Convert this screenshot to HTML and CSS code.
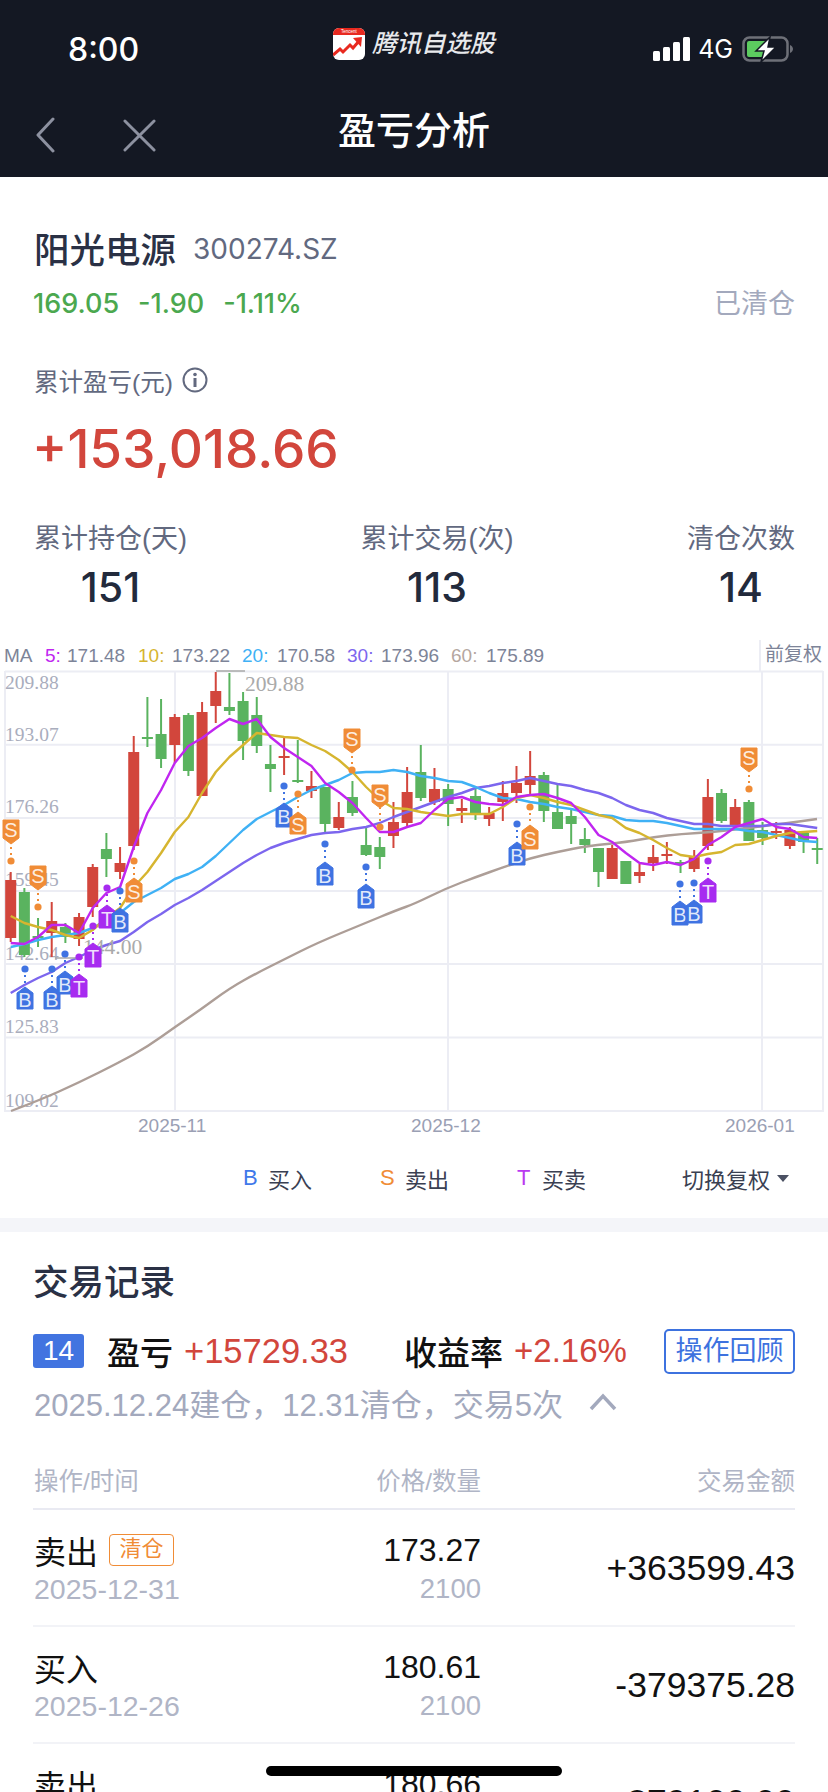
FILE: index.html
```html
<!DOCTYPE html>
<html lang="zh-CN">
<head>
    <meta charset="UTF-8">
    <meta name="viewport" content="width=device-width, initial-scale=1.0">
    <title>盈亏分析</title>
    <link rel="stylesheet" href="styles.css">
</head>
<body>
    <div class="page">
        <header class="app-header">
            <div class="status-bar">
                <div class="clock">8:00</div>
                <div class="app-brand">
                    <svg class="app-logo" viewBox="0 0 32 32">
                        <rect width="32" height="32" rx="6" fill="#fff"/>
                        <path d="M0 7V6a6 6 0 0 1 6-6h20a6 6 0 0 1 6 6v1z" fill="#e8291f"/>
                        <text class="logo-text" x="16" y="5">Tencent</text>
                        <path d="M0 27l7-6 3 3 7-7 3 3 6-7" fill="none" stroke="#e8291f" stroke-width="3"/>
                        <path d="M20 10l9-1-1 10z" fill="#e8291f"/>
                    </svg>
                    <span class="app-name">腾讯自选股</span>
                </div>
                <div class="status-icons">
                    <svg class="signal" viewBox="0 0 37 24">
                        <rect x="0" y="14" width="7" height="10" rx="1.5"/>
                        <rect x="10" y="10" width="7" height="14" rx="1.5"/>
                        <rect x="20" y="5" width="7" height="19" rx="1.5"/>
                        <rect x="30" y="0" width="7" height="24" rx="1.5"/>
                    </svg>
                    <span class="network">4G</span>
                    <svg class="battery" viewBox="0 0 52 26">
                        <rect x="1.5" y="1.5" width="44" height="23" rx="6" fill="none" stroke="#6e7078" stroke-width="2.5"/>
                        <path d="M48 9c2 1 3 2.500 3 4s-1 3-3 4z" fill="#6e7078"/>
                        <path d="M7 5h18v16H7a2 2 0 0 1-2-2V7a2 2 0 0 1 2-2z" fill="#5ccb5f"/>
                        <path d="M28 1L14 15h8l-3 11 15-15h-8z" fill="#fff" stroke="#141823" stroke-width="1.500"/>
                    </svg>
                </div>
            </div>
            <nav class="nav-bar">
                <svg class="nav-icon nav-back" viewBox="0 0 20 36"><path d="M18 2L3 18l15 16"/></svg>
                <svg class="nav-icon nav-close" viewBox="0 0 34 34"><path d="M2 2l30 30M32 2L2 32"/></svg>
                <h1 class="nav-title">盈亏分析</h1>
            </nav>
        </header>

        <section class="summary">
            <div class="name-row">
                <span class="stock-name">阳光电源</span>
                <span class="stock-code">300274.SZ</span>
            </div>
            <div class="quote-row">
                <span class="quote">169.05</span>
                <span class="quote">-1.90</span>
                <span class="quote">-1.11%</span>
                <span class="cleared">已清仓</span>
            </div>
            <div class="total-label">
                累计盈亏(元)
                <svg class="info-icon" viewBox="0 0 26 26">
                    <circle cx="13" cy="13" r="11.500" fill="none" stroke="#62697f" stroke-width="2"/>
                    <circle cx="13" cy="7.500" r="1.800" fill="#62697f"/>
                    <rect x="11.500" y="11" width="3" height="9" fill="#62697f"/>
                </svg>
            </div>
            <div class="total-value">+153,018.66</div>
            <div class="stats">
                <div class="stat">
                    <div class="stat-label">累计持仓(天)</div>
                    <div class="stat-value">151</div>
                </div>
                <div class="stat">
                    <div class="stat-label">累计交易(次)</div>
                    <div class="stat-value">113</div>
                </div>
                <div class="stat">
                    <div class="stat-label">清仓次数</div>
                    <div class="stat-value">14</div>
                </div>
            </div>
        </section>

        <svg id="kline" class="kline" viewBox="0 636 828 500"></svg>

        <div class="legend">
            <span class="legend-item"><b class="mark mark-buy">B</b>买入</span>
            <span class="legend-item"><b class="mark mark-sell">S</b>卖出</span>
            <span class="legend-item"><b class="mark mark-both">T</b>买卖</span>
            <span class="legend-switch">切换复权<i class="caret"></i></span>
        </div>

        <div class="section-gap"></div>

        <section class="trades">
            <h2 class="trades-title">交易记录</h2>
            <div class="round-row">
                <span class="round-no">14</span>
                <span class="round-key">盈亏</span>
                <span class="round-val">+15729.33</span>
                <span class="round-key round-key-rate">收益率</span>
                <span class="round-val round-val-rate">+2.16%</span>
                <span class="review-btn">操作回顾</span>
            </div>
            <div class="round-dates">
                2025.12.24建仓，12.31清仓，交易5次
                <svg class="fold-icon" viewBox="0 0 28 18"><path d="M2 16L14 3l12 13"/></svg>
            </div>
            <div class="trade-head">
                <span>操作/时间</span>
                <span class="cell-price">价格/数量</span>
                <span class="cell-amount">交易金额</span>
            </div>
            <div class="trade-row">
                <div>
                    <div class="trade-type">卖出<span class="clear-tag">清仓</span></div>
                    <div class="trade-date">2025-12-31</div>
                </div>
                <div class="cell-price">
                    <div class="trade-price">173.27</div>
                    <div class="trade-qty">2100</div>
                </div>
                <div class="cell-amount">+363599.43</div>
            </div>
            <div class="trade-row">
                <div>
                    <div class="trade-type">买入</div>
                    <div class="trade-date">2025-12-26</div>
                </div>
                <div class="cell-price">
                    <div class="trade-price">180.61</div>
                    <div class="trade-qty">2100</div>
                </div>
                <div class="cell-amount">-379375.28</div>
            </div>
            <div class="trade-row">
                <div>
                    <div class="trade-type">卖出</div>
                    <div class="trade-date">2025-12-26</div>
                </div>
                <div class="cell-price">
                    <div class="trade-price">180.66</div>
                    <div class="trade-qty">2100</div>
                </div>
                <div class="cell-amount">+379100.00</div>
            </div>
        </section>

        <div class="home-bar"></div>
    </div>

    <script src="chart.js"></script>
</body>
</html>
```
FILE: styles.css
```css
* {
    box-sizing: border-box;
}
html, body {
    margin: 0;
    padding: 0;
    background-color: white;
}
body {
    font-family: 'Liberation Sans', 'Noto Sans CJK SC', sans-serif;
}
.page {
    position: relative;
    width: 828px;
    height: 1792px;
    overflow: hidden;
}

/* top bar */
.app-header {
    height: 177px;
    background-color: #141823;
    color: white;
}
.status-bar {
    position: relative;
    display: flex;
    justify-content: space-between;
    align-items: center;
    height: 88px;
    padding: 10px 34px 0 68px;
}
.clock {
    font-family: Inter, sans-serif;
    font-size: 32px;
    font-weight: 500;
}
.app-brand {
    position: absolute;
    left: 333px;
    top: 28px;
    display: flex;
    align-items: center;
    gap: 7px;
    height: 32px;
}
.app-logo {
    width: 32px;
    height: 32px;
}
.logo-text {
    font-size: 4.5px;
    fill: white;
    text-anchor: middle;
}
.app-name {
    font-size: 24.500px;
    font-weight: 500;
    font-style: italic;
    line-height: 32px;
    color: #e8e9ec;
}
.status-icons {
    display: flex;
    align-items: center;
}
.signal {
    width: 37px;
    height: 24px;
    fill: white;
}
.network {
    font-family: Inter, sans-serif;
    font-size: 25px;
    margin: 0 9px 0 8px;
}
.battery {
    width: 52px;
    height: 26px;
}
.nav-bar {
    position: relative;
    display: flex;
    align-items: center;
    height: 89px;
    padding-left: 35px;
}
.nav-icon {
    fill: none;
    stroke: #8d91a0;
    stroke-width: 3;
    stroke-linecap: round;
    stroke-linejoin: round;
}
.nav-back {
    width: 20px;
    height: 36px;
    margin-top: 5px;
}
.nav-close {
    width: 33px;
    height: 33px;
    margin: 6px 0 0 68px;
}
.nav-title {
    position: absolute;
    left: 0;
    right: 0;
    top: 19px;
    margin: 0;
    text-align: center;
    font-size: 38px;
    font-weight: 500;
    line-height: 48px;
}

/* stock summary */
.summary {
    padding: 44px 33px 0 34px;
}
.name-row {
    display: flex;
    align-items: center;
    height: 52px;
}
.stock-name {
    font-size: 35.500px;
    font-weight: 500;
    color: #2a3145;
}
.stock-code {
    font-family: Inter, sans-serif;
    font-size: 28px;
    color: #62697f;
    margin: 3px 0 0 17px;
}
.quote-row {
    display: flex;
    align-items: center;
    gap: 19px;
    height: 58px;
    margin: 1px 0 0 -1px;
}
.quote {
    font-family: Inter, sans-serif;
    font-size: 27px;
    font-weight: 500;
    color: #4ba84f;
}
.cleared {
    margin: 0 0 4px auto;
    font-size: 27px;
    color: #a3a9bd;
}
.total-label {
    display: flex;
    align-items: center;
    gap: 9px;
    height: 34px;
    margin-top: 31px;
    font-size: 24.500px;
    color: #62697f;
}
.info-icon {
    width: 26px;
    height: 26px;
}
.total-value {
    height: 97px;
    margin-left: -2px;
    padding-top: 2px;
    font-family: Inter, sans-serif;
    font-size: 53px;
    font-weight: 500;
    line-height: 100px;
    color: #d2463c;
}
.stats {
    display: flex;
    justify-content: space-between;
    margin-top: 25px;
}
.stat {
    text-align: center;
}
.stat-label {
    font-size: 27px;
    line-height: 40px;
    color: #62697f;
}
.stat-value {
    font-family: Inter, sans-serif;
    font-size: 41px;
    font-weight: 500;
    line-height: 56px;
    color: #222a3c;
}

/* kline chart */
.kline {
    display: block;
    width: 828px;
    height: 500px;
    margin-top: 21px;
}
.kline text {
    font-family: 'Liberation Sans', 'Noto Sans CJK SC', sans-serif;
    font-size: 19px;
}
.kline .axis-price {
    font-family: 'Liberation Serif', serif;
    font-size: 19.5px;
    fill: #a9adbd;
}
.kline .axis-extreme {
    font-family: 'Liberation Serif', serif;
    font-size: 21.5px;
    fill: #aaaaaa;
}
.kline .axis-date {
    fill: #9aa0b4;
}
.kline .ma-value {
    fill: #7d8498;
}
.kline .adjust-label {
    fill: #7d8498;
}
.kline .tag-letter {
    font-size: 20px;
    fill: white;
    fill-opacity: 0.85;
    text-anchor: middle;
}

.legend {
    position: relative;
    display: flex;
    align-items: center;
    height: 82px;
    padding: 2px 0 0 243px;
    font-size: 22px;
    color: #3a4052;
}
.legend-item {
    display: flex;
    align-items: center;
    width: 137px;
}
.mark {
    width: 25px;
    font-weight: normal;
}
.mark-buy {
    color: #4078ea;
}
.mark-sell {
    color: #f08c36;
}
.mark-both {
    color: #b93af0;
}
.legend-switch {
    position: absolute;
    left: 682px;
    display: flex;
    align-items: center;
    gap: 7px;
}
.caret {
    width: 0;
    height: 0;
    border-left: 6px solid transparent;
    border-right: 6px solid transparent;
    border-top: 7px solid #4b5163;
}
.section-gap {
    height: 14px;
    background-color: #f4f5f9;
}

/* trade records */
.trades {
    padding: 31px 33px 0;
}
.trades-title {
    margin: 0;
    font-size: 35.500px;
    font-weight: 500;
    line-height: 40px;
    color: #2a3145;
}
.round-row {
    display: flex;
    align-items: center;
    height: 48px;
    margin-top: 24px;
}
.round-no {
    width: 51px;
    height: 34px;
    border-radius: 3px;
    background-color: #4274e0;
    color: white;
    font-size: 28px;
    line-height: 34px;
    text-align: center;
}
.round-key {
    margin-left: 23px;
    font-size: 33px;
    font-weight: 500;
    color: #111;
}
.round-val {
    margin-left: 11px;
    font-size: 34.500px;
    color: #d2463c;
}
.round-val-rate {
    font-size: 33px;
}
.round-key-rate {
    margin-left: 56px;
}
.review-btn {
    margin-left: auto;
    width: 131px;
    height: 45px;
    border: 2px solid #3d72df;
    border-radius: 5px;
    color: #3d72df;
    font-size: 27px;
    line-height: 40px;
    text-align: center;
}
.round-dates {
    display: flex;
    align-items: center;
    height: 54px;
    padding-left: 1px;
    font-size: 31px;
    color: #a3a9bd;
}
.fold-icon {
    width: 28px;
    height: 18px;
    margin-left: 26px;
    fill: none;
    stroke: #a3a9bd;
    stroke-width: 3.500;
}
.trade-head,
.trade-row {
    display: grid;
    grid-template-columns: 1fr 191px 314px;
}
.trade-head {
    align-items: center;
    height: 60px;
    margin-top: 21px;
    padding-left: 1px;
    border-bottom: 2px solid #e9eaf2;
    font-size: 24.500px;
    color: #b0b5c6;
}
.trade-row {
    height: 117px;
    padding: 19px 0 0 1px;
    border-bottom: 2px solid #f2f3f7;
}
.cell-price,
.cell-amount {
    text-align: right;
}
.trade-row .cell-amount {
    margin-top: 19px;
    font-size: 35.500px;
    line-height: 40px;
    color: #111;
}
.trade-type {
    display: flex;
    align-items: center;
    height: 42px;
    font-size: 32px;
    color: #111;
}
.clear-tag {
    width: 65px;
    height: 32px;
    margin-left: 11px;
    border: 1.500px solid #f08c36;
    border-radius: 4px;
    color: #f08c36;
    font-size: 22px;
    line-height: 28px;
    text-align: center;
}
.trade-price {
    height: 42px;
    font-size: 32px;
    line-height: 42px;
    color: #111;
}
.trade-date,
.trade-qty {
    line-height: 36px;
    color: #b0b5c6;
}
.trade-date {
    font-size: 28.500px;
}
.trade-qty {
    font-size: 27.500px;
}
.home-bar {
    position: absolute;
    left: 266px;
    top: 1766px;
    width: 296px;
    height: 10px;
    border-radius: 5px;
    background-color: black;
}
```
FILE: chart.js
```js
// Coordinates are page pixels: the svg viewBox starts at y=636
const NS = 'http://www.w3.org/2000/svg';
const svg = document.getElementById('kline');

const RED = '#d2463c';
const GREEN = '#5ab35f';
const GRID = '#ecedf4';
const TAG_COLORS = { B: '#3f73e2', S: '#f08c36', T: '#a72bf0' };

// [high, low, bodyTop, bodyBottom, up?]
const candles = [
    [872, 942, 880, 938, 1], [888, 957, 892, 955, 0], [918, 947, 936, 938, 0], [902, 957, 921, 933, 1],
    [923, 943, 927, 937, 0], [913, 946, 917, 939, 1], [864, 917, 867, 907, 1], [833, 877, 849, 859, 0],
    [847, 879, 863, 872, 1], [736, 850, 752, 846, 1], [697, 747, 737, 739, 0], [699, 768, 734, 759, 0],
    [714, 763, 717, 745, 1], [713, 776, 715, 771, 0], [702, 796, 712, 796, 1], [672, 723, 691, 706, 1],
    [673, 715, 707, 711, 0], [692, 760, 701, 741, 0], [697, 753, 715, 746, 0], [745, 792, 764, 769, 0],
    [737, 775, 756, 758, 1], [740, 783, 780, 782, 0], [771, 798, 786, 791, 1], [787, 832, 787, 824, 0],
    [802, 830, 817, 828, 1], [781, 816, 797, 813, 0], [827, 856, 845, 855, 0], [837, 869, 847, 857, 0],
    [802, 848, 822, 836, 1], [767, 827, 792, 823, 1], [745, 801, 772, 798, 0], [768, 805, 789, 802, 1],
    [784, 826, 789, 804, 0], [799, 823, 808, 811, 1], [786, 820, 796, 814, 0], [807, 826, 813, 819, 1],
    [781, 821, 793, 802, 1], [766, 803, 783, 793, 1], [751, 795, 776, 785, 1], [772, 822, 775, 811, 0],
    [785, 829, 812, 829, 0], [808, 844, 816, 824, 0], [828, 853, 839, 845, 0], [848, 887, 848, 872, 0],
    [845, 879, 848, 879, 1], [861, 884, 861, 884, 0], [864, 883, 872, 876, 1], [845, 871, 857, 863, 1],
    [842, 864, 854, 856, 1], [860, 873, 862, 864, 0], [850, 872, 857, 869, 1], [779, 850, 797, 846, 1],
    [789, 823, 793, 821, 0], [799, 825, 807, 825, 1], [800, 841, 802, 841, 0], [822, 845, 830, 838, 0],
    [822, 839, 831, 833, 1], [827, 849, 830, 846, 1], [833, 853, 833, 842, 0], [838, 864, 848, 850, 0]
];

const ma5 = [943, 944, 937, 925, 925, 933, 908, 893, 887, 847, 813, 790, 763, 746, 738, 728, 719, 724, 719, 737,
    748, 757, 766, 783, 792, 803, 818, 832, 832, 827, 823, 810, 799, 797, 802, 804, 805, 797, 795, 794,
    798, 803, 817, 835, 842, 853, 863, 865, 862, 865, 859, 845, 837, 827, 823, 819, 827, 829, 837, 838];
const ma10 = [916, 923, 927, 930, 935, 938, 930, 918, 908, 887, 872, 853, 832, 817, 793, 772, 757, 745, 733, 735,
    737, 738, 745, 751, 760, 772, 787, 800, 808, 809, 812, 814, 816, 814, 814, 814, 807, 798, 795, 798,
    802, 805, 810, 815, 818, 828, 833, 840, 848, 855, 857, 854, 852, 845, 844, 840, 836, 833, 832, 831];
const ma20 = [947, 944, 940, 937, 935, 933, 928, 920, 913, 902, 895, 888, 879, 874, 867, 856, 843, 830, 819, 812,
    805, 797, 790, 785, 780, 773, 772, 772, 770, 772, 776, 778, 781, 782, 787, 793, 798, 799, 802, 804,
    807, 809, 812, 815, 816, 820, 821, 821, 823, 826, 829, 829, 829, 829, 831, 832, 835, 838, 841, 842];
const ma30 = [993, 985, 978, 972, 963, 957, 950, 945, 941, 932, 922, 914, 905, 898, 890, 881, 872, 863, 855, 848,
    843, 839, 835, 833, 832, 829, 827, 823, 817, 812, 807, 802, 797, 793, 788, 786, 783, 781, 778, 781,
    784, 786, 790, 793, 798, 805, 810, 813, 818, 821, 824, 824, 826, 826, 826, 826, 824, 824, 826, 828];
const ma60 = [[11, 1111], [40, 1100], [78, 1083], [120, 1062], [147, 1047], [175, 1027], [200, 1010], [230, 988],
    [257, 973], [283, 960], [317, 943], [363, 924], [397, 910], [414, 904], [447, 888], [476, 877], [504, 867],
    [531, 858], [557, 852], [587, 846], [627, 842], [654, 837], [681, 834], [714, 832], [747, 828], [781, 824], [817, 819]];

// [letter, candle x, dot y, near edge of the tag, far edge of the tag]
const markers = [
    ['S', 11, 861, 844, 820], ['S', 38, 907, 890, 866], ['B', 25, 969, 987, 1009], ['B', 52, 969, 986, 1009],
    ['B', 65, 954, 971, 994], ['T', 79, 957, 974, 997], ['T', 93, 926, 943, 967], ['T', 107, 888, 905, 928],
    ['B', 120, 891, 908, 932], ['S', 134, 861, 878, 902], ['B', 284, 786, 803, 827], ['S', 298, 794, 812, 834],
    ['B', 325, 844, 862, 885], ['S', 352, 770, 753, 729], ['B', 366, 867, 884, 908], ['S', 380, 827, 808, 785],
    ['B', 517, 824, 842, 865], ['S', 530, 807, 825, 849], ['B', 680, 884, 901, 925], ['B', 694, 883, 900, 923],
    ['T', 708, 861, 878, 902], ['S', 749, 789, 772, 748]
];

function add(tag, attrs, text) {
    const el = document.createElementNS(NS, tag);
    for (const key in attrs) {
        el.setAttribute(key, attrs[key]);
    }
    if (text !== undefined) {
        el.textContent = text;
    }
    svg.appendChild(el);
    return el;
}

function candleX(i) {
    return 10.7 + 13.67 * i;
}

function drawLine(points, color) {
    add('polyline', {
        points: points.map(p => p.join(',')).join(' '),
        fill: 'none',
        stroke: color,
        'stroke-width': 2.4,
        'stroke-linejoin': 'round'
    });
}

// the long average is drawn smooth, through the midpoints
function drawSmoothLine(points, color) {
    let d = `M${points[0][0]} ${points[0][1]}`;
    for (let i = 1; i < points.length - 1; i++) {
        const midX = (points[i][0] + points[i + 1][0]) / 2;
        const midY = (points[i][1] + points[i + 1][1]) / 2;
        d += `Q${points[i][0]} ${points[i][1]} ${midX} ${midY}`;
    }
    const last = points[points.length - 1];
    d += `L${last[0]} ${last[1]}`;
    add('path', { d: d, fill: 'none', stroke: color, 'stroke-width': 2.4 });
}

function drawGrid() {
    [671.5, 744.8, 818, 891, 964, 1037.5, 1111].forEach(y => {
        add('line', { x1: 5, x2: 823, y1: y, y2: y, stroke: GRID, 'stroke-width': 2 });
    });
    [5, 175, 448, 762, 823].forEach(x => {
        add('line', { x1: x, x2: x, y1: 671, y2: 1112, stroke: GRID, 'stroke-width': 2 });
    });
    add('line', { x1: 760, x2: 760, y1: 640, y2: 671, stroke: GRID, 'stroke-width': 2 });
}

function drawLabels() {
    const prices = [['209.88', 689], ['193.07', 741], ['176.26', 813], ['159.45', 886],
        ['142.64', 960], ['125.83', 1033], ['109.02', 1107]];
    prices.forEach(([label, y]) => add('text', { x: 5, y: y, class: 'axis-price' }, label));

    [['2025-11', 138], ['2025-12', 411], ['2026-01', 725]].forEach(([label, x]) => {
        add('text', { x: x, y: 1132, class: 'axis-date' }, label);
    });

    const legend = [['MA', 4, '#7d8498'], ['5:', 45, '#c026f0'], ['171.48', 67], ['10:', 138, '#d6b52f'], ['173.22', 172],
        ['20:', 242, '#3fb1f5'], ['170.58', 277], ['30:', 347, '#7c66ee'], ['173.96', 381],
        ['60:', 451, '#b5a79f'], ['175.89', 486]];
    legend.forEach(([label, x, color]) => {
        const el = add('text', { x: x, y: 662, class: 'ma-value' }, label);
        if (color) {
            el.style.fill = color;
        }
    });
    add('text', { x: 765, y: 661, class: 'adjust-label' }, '前复权');
}

function drawCandles() {
    candles.forEach(([high, low, top, bottom, up], i) => {
        const x = candleX(i);
        const color = up ? RED : GREEN;
        add('line', { x1: x, x2: x, y1: high, y2: low, stroke: color, 'stroke-width': 2 });
        add('rect', { x: x - 5.5, y: top, width: 11, height: bottom - top, fill: color });
    });
}

function drawExtremes() {
    add('line', { x1: 216, x2: 245, y1: 671, y2: 671, stroke: '#a8a8a8', 'stroke-width': 1.5 });
    add('text', { x: 245, y: 691, class: 'axis-extreme' }, '209.88');
    add('line', { x1: 55, x2: 83, y1: 958, y2: 958, stroke: '#a8a8a8', 'stroke-width': 1.5 });
    add('text', { x: 83, y: 954, class: 'axis-extreme' }, '144.00');
}

function drawMarker([letter, x, dotY, near, far]) {
    const color = TAG_COLORS[letter];
    const dir = far > near ? 1 : -1;
    add('line', {
        x1: x, x2: x, y1: dotY + dir * 6, y2: near,
        stroke: color, 'stroke-width': 2, 'stroke-dasharray': '2 4'
    });
    add('circle', { cx: x, cy: dotY, r: 3.6, fill: color });
    const d = `M${x} ${near}L${x + 8} ${near + dir * 6}V${far}H${x - 8}V${near + dir * 6}Z`;
    add('path', { d: d, fill: color, stroke: color, 'stroke-width': 1, 'stroke-linejoin': 'round' });
    const mid = (near + dir * 4 + far) / 2;
    add('text', { x: x, y: mid + 7, class: 'tag-letter' }, letter);
}

drawGrid();
drawLabels();
drawCandles();
drawSmoothLine(ma60, '#ad9e97');
drawLine(ma30.map((y, i) => [candleX(i), y]), '#7c66ee');
drawLine(ma20.map((y, i) => [candleX(i), y]), '#3fb1f5');
drawLine(ma10.map((y, i) => [candleX(i), y]), '#d6b52f');
drawLine(ma5.map((y, i) => [candleX(i), y]), '#c026f0');
drawExtremes();
markers.forEach(drawMarker);
```
